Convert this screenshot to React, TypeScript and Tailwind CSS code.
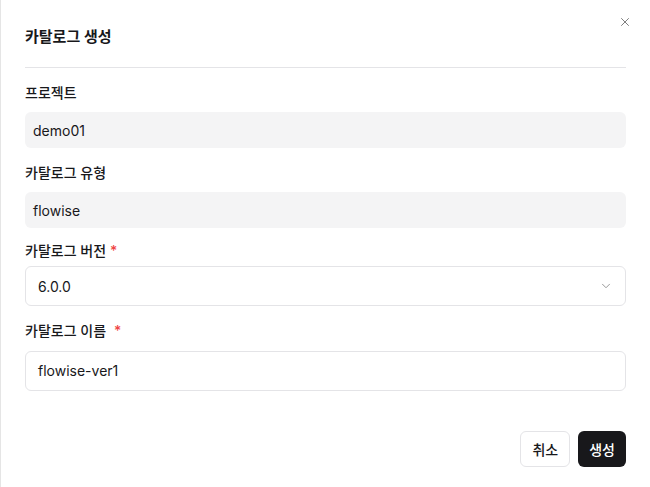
import { X, ChevronDown } from 'lucide-react'

const font = { fontFamily: "Inter, 'Noto Sans CJK KR', sans-serif" }

function Label({ text, required, wide }: { text: string; required?: boolean; wide?: boolean }) {
  return (
    <p className="text-[14px] font-medium leading-5 text-[#18181b]">
      {text}
      {required && <span className={`text-[#ef4444] ${wide ? 'ml-2' : 'ml-1'}`}>*</span>}
    </p>
  )
}

export default function App() {
  return (
    <div
      className="relative w-[650px] h-[487px] bg-white border-l border-[#e5e5e5] px-6 text-[#18181b]"
      style={font}
    >
      {/* Close */}
      <button className="absolute right-[18px] top-[15px] text-[#6b6b6b]">
        <X size={14} strokeWidth={1.5} />
      </button>

      {/* Header */}
      <div className="pt-[26px] pb-[19px] border-b border-[#e4e4e7]">
        <h2 className="text-[15px] font-semibold leading-[22px]">카탈로그 생성</h2>
      </div>

      {/* Form */}
      <div className="pt-[15px] flex flex-col">
        <Label text="프로젝트" />
        <div className="mt-[9px] h-9 rounded-md bg-[#f4f4f5] px-2 flex items-center text-[14px]">demo01</div>

        <div className="mt-[15px]">
          <Label text="카탈로그 유형" />
        </div>
        <div className="mt-[9px] h-9 rounded-md bg-[#f4f4f5] px-2 flex items-center text-[14px]">flowise</div>

        <div className="mt-[13px]">
          <Label text="카탈로그 버전" required />
        </div>
        <div className="mt-[5px] h-[40px] rounded-md border border-[#e4e4e7] px-3 flex items-center justify-between text-[14px]">
          <span>6.0.0</span>
          <ChevronDown size={14} strokeWidth={1.5} className="text-[#8a8a8a]" />
        </div>

        <div className="mt-[15px]">
          <Label text="카탈로그 이름" required wide />
        </div>
        <div className="mt-[10px] h-[40px] rounded-md border border-[#e4e4e7] px-3 flex items-center text-[14px] leading-5 pb-px">
          flowise-ver1
        </div>

        {/* Footer */}
        <div className="mt-[40px] flex justify-end gap-2">
          <button className="h-9 px-[11px] rounded-md border border-[#e4e4e7] bg-white text-[14px] font-medium">취소</button>
          <button className="h-9 px-[11px] rounded-md bg-[#18181b] text-white text-[14px] font-medium">생성</button>
        </div>
      </div>
    </div>
  )
}
